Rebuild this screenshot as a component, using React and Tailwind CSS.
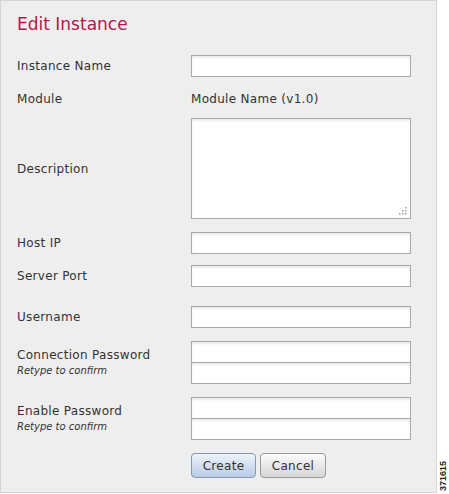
import React from 'react';

const font = { fontFamily: '"DejaVu Sans", Verdana, sans-serif' };

function Field({ className = '' }) {
    return (
        <div
            className={`w-[220px] h-[22px] bg-white border border-[#a9a9a9] shadow-[inset_0_2px_2px_rgba(0,0,0,0.08)] ${className}`}
        />
    );
}

function Row({ label, children, className = '' }) {
    return (
        <div className={`flex items-center ${className}`}>
            <div className="w-[174px] text-[12px] tracking-[0.3px] text-[#333]">{label}</div>
            {children}
        </div>
    );
}

function PasswordRow({ label, className = '' }) {
    return (
        <div className={`flex ${className}`}>
            <div className="w-[174px] text-[#333]">
                <div className="pt-[6px] text-[12px] leading-[16px] tracking-[0.3px]">{label}</div>
                <div className="mt-[1px] text-[10px] leading-[13px] italic">Retype to confirm</div>
            </div>
            <div className="flex flex-col">
                <Field />
                <Field className="-mt-px" />
            </div>
        </div>
    );
}

export default function App() {
    return (
        <div className="flex w-[449px] h-[494px] bg-white" style={font}>
            <div className="w-[437px] h-[493px] bg-[#eeeeee] border border-[#d4d4d4] pl-[16px] flex flex-col">
                <div className="pt-[12px] text-[17px] leading-[22px] text-[#b3174b]">Edit Instance</div>

                <Row label="Instance Name" className="mt-[20px]">
                    <Field />
                </Row>

                <Row label="Module" className="mt-[11px] h-[22px]">
                    <span className="text-[12px] tracking-[0.3px] text-[#333]">Module Name (v1.0)</span>
                </Row>

                <Row label="Description" className="mt-[8px]">
                    <div className="relative w-[220px] h-[101px] bg-white border border-[#a9a9a9] shadow-[inset_0_2px_2px_rgba(0,0,0,0.08)]">
                        <svg className="absolute right-[3px] bottom-[3px]" width="9" height="9" viewBox="0 0 9 9">
                            <rect x="7" y="1" width="1.5" height="1.5" fill="#9a9a9a" />
                            <rect x="4" y="4" width="1.5" height="1.5" fill="#9a9a9a" />
                            <rect x="7" y="4" width="1.5" height="1.5" fill="#9a9a9a" />
                            <rect x="1" y="7" width="1.5" height="1.5" fill="#9a9a9a" />
                            <rect x="4" y="7" width="1.5" height="1.5" fill="#9a9a9a" />
                            <rect x="7" y="7" width="1.5" height="1.5" fill="#9a9a9a" />
                        </svg>
                    </div>
                </Row>

                <Row label="Host IP" className="mt-[13px]">
                    <Field />
                </Row>

                <Row label="Server Port" className="mt-[11px]">
                    <Field />
                </Row>

                <Row label="Username" className="mt-[19px]">
                    <Field />
                </Row>

                <PasswordRow label="Connection Password" className="mt-[13px]" />
                <PasswordRow label="Enable Password" className="mt-[13px]" />

                <div className="flex gap-[4px] ml-[174px] mt-[13px]">
                    <button className="w-[65px] h-[25px] rounded-[4px] border border-[#8797b0] bg-gradient-to-b from-[#eef3fa] to-[#b8cce6] text-[12px] tracking-[0.3px] text-[#333]">
                        Create
                    </button>
                    <button className="w-[66px] h-[25px] rounded-[4px] border border-[#9a9a9a] bg-gradient-to-b from-[#fbfbfb] to-[#d6d6d6] text-[12px] tracking-[0.3px] text-[#333]">
                        Cancel
                    </button>
                </div>
            </div>
            <div className="flex-1 flex items-end justify-center pb-[3px]">
                <span
                    className="[writing-mode:vertical-rl] rotate-180 text-[9px] font-bold text-[#222] leading-none"
                    style={{ fontFamily: '"Liberation Sans", Arial, sans-serif' }}
                >
                    371615
                </span>
            </div>
        </div>
    );
}
